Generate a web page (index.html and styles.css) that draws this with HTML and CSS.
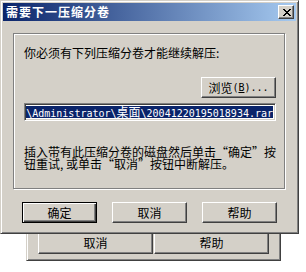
FILE: index.html
```html
<!DOCTYPE html>
<html lang="zh-CN">
<head>
<meta charset="utf-8">
<title>需要下一压缩分卷</title>
<link rel="stylesheet" href="styles.css">
</head>
<body>
  <div class="win back">
    <div class="back-body">
      <div class="btn wide">取消</div>
      <div class="btn wide">帮助</div>
    </div>
  </div>

  <div class="win front">
    <div class="titlebar">
      <span class="title">需要下一压缩分卷</span>
      <div class="close">
        <svg width="8" height="7" viewBox="0 0 8 7" shape-rendering="crispEdges"><path d="M0 0h2v1H0zM6 0h2v1H6zM1 1h2v1H1zM5 1h2v1H5zM2 2h4v1H2zM3 3h2v1H3zM2 4h4v1H2zM1 5h2v1H1zM5 5h2v1H5zM0 6h2v1H0zM6 6h2v1H6z" fill="#000"/></svg>
      </div>
    </div>
    <div class="client">
      <div class="frame">
        <div class="label">你必须有下列压缩分卷才能继续解压:</div>
        <div class="browse-row">
          <div class="btn">浏览<span class="asc">(<u>B</u>)...</span></div>
        </div>
        <div class="edit"><span class="sel">\Administrator\<span class="cjk">桌面</span>\20041220195018934.rar</span></div>
        <div class="msg">插入带有此压缩分卷的磁盘然后单击“确定”按<br>钮重试, 或单击“取消”按钮中断解压。</div>
      </div>
      <div class="buttons">
        <div class="btn default">确定</div>
        <div class="btn">取消</div>
        <div class="btn">帮助</div>
      </div>
    </div>
  </div>
</body>
</html>
```
FILE: styles.css
```css
* { box-sizing: border-box; }
html, body { margin: 0; padding: 0; }
body {
  width: 306px;
  height: 272px;
  background: #fff;
  position: relative;
  overflow: hidden;
  font-family: "Noto Sans CJK SC", sans-serif;
  font-size: 12px;
  color: #000;
}

.win {
  position: absolute;
  background: #d4d0c8;
  border: 1px solid;
  border-color: #d4d0c8 #404040 #404040 #d4d0c8;
  box-shadow: inset 1px 1px 0 #fff, inset -1px -1px 0 #808080;
  padding: 2px;
  display: flex;
  flex-direction: column;
}
.front { left: 0; top: 0; width: 299px; height: 234px; }
.back { left: 26px; top: 120px; width: 255px; height: 141px; justify-content: flex-end; }

.titlebar {
  height: 18px;
  background: linear-gradient(to right, #0a246a, #a6caf0);
  display: flex;
  align-items: center;
  justify-content: space-between;
  padding: 0 2px 0 3px;
}
.title {
  color: #fff;
  font-weight: bold;
  letter-spacing: 1px;
  line-height: 18px;
}
.close {
  width: 16px;
  height: 14px;
  background: #d4d0c8;
  border: 1px solid;
  border-color: #fff #404040 #404040 #fff;
  box-shadow: inset -1px -1px 0 #808080;
  display: flex;
  align-items: flex-start;
  padding: 3px 0 0 4px;
}
.close svg { display: block; }

.client {
  flex: 1;
  padding: 12px 0 0 10px;
  display: flex;
  flex-direction: column;
}
.frame {
  width: 272px;
  height: 156px;
  border: 1px solid #808080;
  box-shadow: 1px 1px 0 #fff, inset 1px 1px 0 #fff;
  padding: 13px 8px 0 10px;
  display: flex;
  flex-direction: column;
}
.label { line-height: 12px; height: 12px; white-space: nowrap; }

.browse-row { display: flex; justify-content: flex-end; margin-top: 18px; }

.btn {
  width: 75px;
  height: 21px;
  background: #d4d0c8;
  border: 1px solid;
  border-color: #fff #404040 #404040 #fff;
  box-shadow: inset -1px -1px 0 #808080;
  display: flex;
  align-items: center;
  justify-content: center;
  line-height: 12px;
  white-space: nowrap;
}
.btn.default {
  border-color: #000;
  box-shadow: inset 1px 1px 0 #fff, inset -1px -1px 0 #404040, inset -2px -2px 0 #808080;
}
.asc { font-family: "DejaVu Sans Mono", monospace; font-size: 10px; }

.edit {
  margin-top: 5px;
  width: 252px;
  height: 18px;
  background: #fff;
  border: 1px solid;
  border-color: #808080 #fff #fff #808080;
  box-shadow: inset 1px 1px 0 #404040, inset -1px -1px 0 #d4d0c8;
  padding: 2px 2px 2px 1px;
  display: flex;
  justify-content: flex-end;
  overflow: hidden;
}
.sel {
  background: #0a246a;
  color: #fff;
  font-family: "DejaVu Sans Mono", "Noto Sans CJK SC", monospace;
  font-size: 10px;
  line-height: 12px;
  height: 12px;
  white-space: nowrap;
}
.sel .cjk { font-family: "Noto Sans CJK SC", sans-serif; font-size: 12px; }

.msg { margin-top: 25px; line-height: 12px; white-space: nowrap; }

.buttons { display: flex; gap: 15px; margin-top: 13px; padding-left: 9px; }

.back-body { display: flex; gap: 1px; padding: 0 0 4px 9px; }
.btn.wide { width: 115px; height: 23px; }
```
